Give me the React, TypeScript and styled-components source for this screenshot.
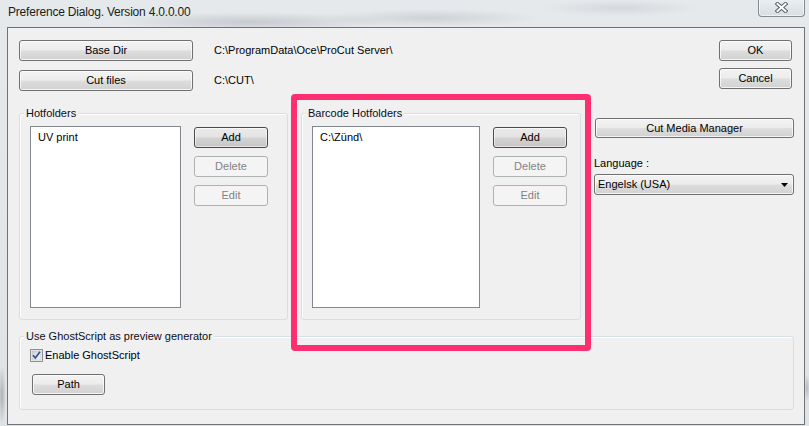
import React from 'react';
import styled, { createGlobalStyle, css } from 'styled-components';

const GlobalStyle = createGlobalStyle`
  html, body { margin: 0; padding: 0; }
  body {
    font-family: "Liberation Sans", Arial, sans-serif;
    font-size: 11px;
    color: #000;
    background: #dfe3e7;
  }
  * { box-sizing: border-box; }
`;

const Window = styled.div`
  position: relative;
  width: 809px;
  height: 426px;
  overflow: hidden;
  display: flex;
  flex-direction: column;
  padding: 0 4px 1px 7px;
  background:
    radial-gradient(ellipse 140px 10px at 250px 22px, rgba(140, 148, 156, 0.35), transparent),
    radial-gradient(ellipse 110px 9px at 430px 18px, rgba(150, 158, 166, 0.3), transparent),
    radial-gradient(ellipse 80px 8px at 620px 8px, rgba(160, 166, 172, 0.25), transparent),
    radial-gradient(ellipse 4px 30px at 2px 395px, rgba(110, 116, 122, 0.45), transparent),
    radial-gradient(ellipse 3px 14px at 807px 388px, rgba(120, 126, 132, 0.4), transparent),
    linear-gradient(180deg, #e6e9ec 0%, #dfe3e6 100%);
`;

const TitleBar = styled.div`
  height: 27px;
  flex: none;
  display: flex;
  align-items: flex-start;
  padding-left: 1px;
`;

const Title = styled.div`
  padding-top: 4px;
  font-size: 12px;
  line-height: 16px;
  letter-spacing: -0.2px;
  color: #1b1b1b;
`;

const CloseButton = styled.div`
  margin-left: auto;
  margin-top: -1px;
  width: 47px;
  height: 18px;
  display: flex;
  align-items: center;
  justify-content: center;
  border: 1px solid #858b92;
  border-top: none;
  border-radius: 0 0 4px 4px;
  background: linear-gradient(180deg, #edf0f2 0%, #e2e6e9 50%, #d9dee2 100%);
  box-shadow: inset 0 0 0 1px rgba(255, 255, 255, 0.55);
`;

const Client = styled.div`
  height: 398px;
  flex: none;
  display: flex;
  flex-direction: column;
  border: 1px solid #6f7377;
  background: #f0f0f0;
  padding: 12px 10px 0 11px;
`;

const TopArea = styled.div`
  display: grid;
  grid-template-columns: 1fr 73px;
  margin-right: 2px;
`;

const PathColumn = styled.div`
  display: flex;
  flex-direction: column;
  gap: 9px;
`;

const DialogColumn = styled.div`
  display: flex;
  flex-direction: column;
  gap: 7px;
`;

const PathRow = styled.div`
  display: flex;
  align-items: center;
  gap: 21px;
`;

const PathText = styled.span`
  line-height: 13px;
`;

type Variant = 'normal' | 'default' | 'disabled';

const Button = styled.button<{ $w: number; $h?: number; $variant?: Variant; $ml?: number }>`
  width: ${(p) => p.$w}px;
  height: ${(p) => p.$h ?? 21}px;
  margin: 0 0 0 ${(p) => p.$ml ?? 0}px;
  padding: 0;
  flex: none;
  font: inherit;
  line-height: 13px;
  color: #000;
  border: 1px solid #707070;
  border-radius: 3px;
  background: linear-gradient(180deg, #f3f3f3 0%, #ececec 48%, #dedede 52%, #d1d1d1 100%);
  box-shadow: inset 0 0 0 1px rgba(255, 255, 255, 0.75);
  ${(p) =>
    p.$variant === 'default' &&
    css`
      border-color: #4a4a4a;
      background: linear-gradient(180deg, #ebebeb 0%, #e3e3e3 48%, #d4d4d4 52%, #c6c6c6 100%);
      box-shadow: inset 0 0 0 1px rgba(255, 255, 255, 0.55);
    `}
  ${(p) =>
    p.$variant === 'disabled' &&
    css`
      border-color: #adb2b5;
      background: #f4f4f4;
      color: #838383;
      box-shadow: none;
    `}
`;

const MiddleRow = styled.div`
  display: flex;
  align-items: flex-start;
  gap: 13px;
  margin-top: 22px;
`;

const GroupBox = styled.div<{ $w?: number; $mt?: number }>`
  ${(p) => (p.$w ? `width: ${p.$w}px;` : '')}
  flex: none;
  margin-top: ${(p) => p.$mt ?? 0}px;
  border: 1px solid #d5dfe5;
  border-radius: 3px;
  box-shadow: inset 1px 1px 0 #ffffff;
`;

const GroupTitle = styled.div`
  width: fit-content;
  margin: -8px 0 0 4px;
  padding: 0 2px;
  line-height: 14px;
  background: #f0f0f0;
  color: #0d0d1a;
`;

const GroupBody = styled.div<{ $pb?: number }>`
  display: flex;
  gap: 13px;
  padding: 6px 0 ${(p) => p.$pb ?? 11}px 10px;
`;

const ListBox = styled.div<{ $w: number }>`
  width: ${(p) => p.$w}px;
  height: 182px;
  flex: none;
  border: 1px solid #828790;
  background: #ffffff;
  padding: 4px 0 0 7px;
  line-height: 13px;
`;

const ButtonColumn = styled.div`
  display: flex;
  flex-direction: column;
  gap: 8px;
  margin-top: 1px;
`;

const RightPanel = styled.div`
  width: 200px;
  flex: none;
  display: flex;
  flex-direction: column;
  padding-top: 5px;
`;

const FieldLabel = styled.div`
  margin-top: 19px;
  line-height: 13px;
`;

const Select = styled.div`
  margin-top: 4px;
  width: 200px;
  height: 21px;
  display: flex;
  align-items: center;
  justify-content: space-between;
  padding: 0 5px 0 3px;
  border: 1px solid #707070;
  border-radius: 3px;
  background: linear-gradient(180deg, #f3f3f3 0%, #ececec 48%, #dedede 52%, #d1d1d1 100%);
  box-shadow: inset 0 0 0 1px rgba(255, 255, 255, 0.75);
  line-height: 13px;
`;

const GhostBody = styled.div`
  display: flex;
  flex-direction: column;
  align-items: flex-start;
  gap: 12px;
  padding: 6px 0 14px 10px;
`;

const CheckRow = styled.label`
  display: flex;
  align-items: center;
  gap: 2px;
  height: 13px;
  line-height: 13px;
`;

const Highlight = styled.div`
  position: absolute;
  left: 291px;
  top: 94px;
  width: 300px;
  height: 257px;
  border: 6px solid #fe2f70;
  border-radius: 4px;
  pointer-events: none;
`;

const CloseGlyph = () => (
  <svg width="13" height="11" viewBox="0 0 13 11">
    <g strokeLinecap="square">
      <path d="M2.5 2 L10.5 9 M10.5 2 L2.5 9" stroke="#5b6168" strokeWidth="4" />
      <path d="M2.5 2 L10.5 9 M10.5 2 L2.5 9" stroke="#ffffff" strokeWidth="2" />
    </g>
  </svg>
);

const CheckBoxIcon = () => (
  <svg width="13" height="13" viewBox="0 0 13 13">
    <defs>
      <linearGradient id="cbg" x1="0" y1="0" x2="1" y2="1">
        <stop offset="0" stopColor="#cbcfd5" />
        <stop offset="1" stopColor="#f6f6f6" />
      </linearGradient>
    </defs>
    <rect x="0.5" y="0.5" width="12" height="12" fill="#f4f4f4" stroke="#8e8f8f" />
    <rect x="2" y="2" width="9" height="9" fill="url(#cbg)" stroke="#b9bcc1" strokeWidth="0.6" />
    <path d="M3 6.2 L5.3 9 L10 2.8" fill="none" stroke="#2d4b8d" strokeWidth="1.6" />
  </svg>
);

const DropArrow = () => (
  <svg width="7" height="4" viewBox="0 0 7 4">
    <path d="M0 0 H7 L3.5 4 Z" fill="#000" />
  </svg>
);

export default function App() {
  return (
    <>
      <GlobalStyle />
      <Window>
        <TitleBar>
          <Title>Preference Dialog. Version 4.0.0.00</Title>
          <CloseButton>
            <CloseGlyph />
          </CloseButton>
        </TitleBar>
        <Client>
          <TopArea>
            <PathColumn>
              <PathRow>
                <Button $w={174}>Base Dir</Button>
                <PathText>C:\ProgramData\Oce\ProCut Server\</PathText>
              </PathRow>
              <PathRow>
                <Button $w={174}>Cut files</Button>
                <PathText>C:\CUT\</PathText>
              </PathRow>
            </PathColumn>
            <DialogColumn>
              <Button $w={73}>OK</Button>
              <Button $w={73}>Cancel</Button>
            </DialogColumn>
          </TopArea>

          <MiddleRow>
            <GroupBox $w={269}>
              <GroupTitle>Hotfolders</GroupTitle>
              <GroupBody>
                <ListBox $w={151}>UV print</ListBox>
                <ButtonColumn>
                  <Button $w={74} $variant="default">Add</Button>
                  <Button $w={74} $variant="disabled">Delete</Button>
                  <Button $w={74} $variant="disabled">Edit</Button>
                </ButtonColumn>
              </GroupBody>
            </GroupBox>

            <GroupBox $w={280}>
              <GroupTitle>Barcode Hotfolders</GroupTitle>
              <GroupBody>
                <ListBox $w={168}>C:\Zünd\</ListBox>
                <ButtonColumn>
                  <Button $w={74} $variant="default">Add</Button>
                  <Button $w={74} $variant="disabled">Delete</Button>
                  <Button $w={74} $variant="disabled">Edit</Button>
                </ButtonColumn>
              </GroupBody>
            </GroupBox>

            <RightPanel>
              <Button $w={199} $h={20} $ml={1}>Cut Media Manager</Button>
              <FieldLabel>Language :</FieldLabel>
              <Select>
                <span>Engelsk (USA)</span>
                <DropArrow />
              </Select>
            </RightPanel>
          </MiddleRow>

          <GroupBox $mt={16}>
            <GroupTitle>Use GhostScript as preview generator</GroupTitle>
            <GhostBody>
              <CheckRow>
                <CheckBoxIcon />
                <span>Enable GhostScript</span>
              </CheckRow>
              <Button $w={73} $ml={2}>Path</Button>
            </GhostBody>
          </GroupBox>
        </Client>
        <Highlight />
      </Window>
    </>
  );
}
